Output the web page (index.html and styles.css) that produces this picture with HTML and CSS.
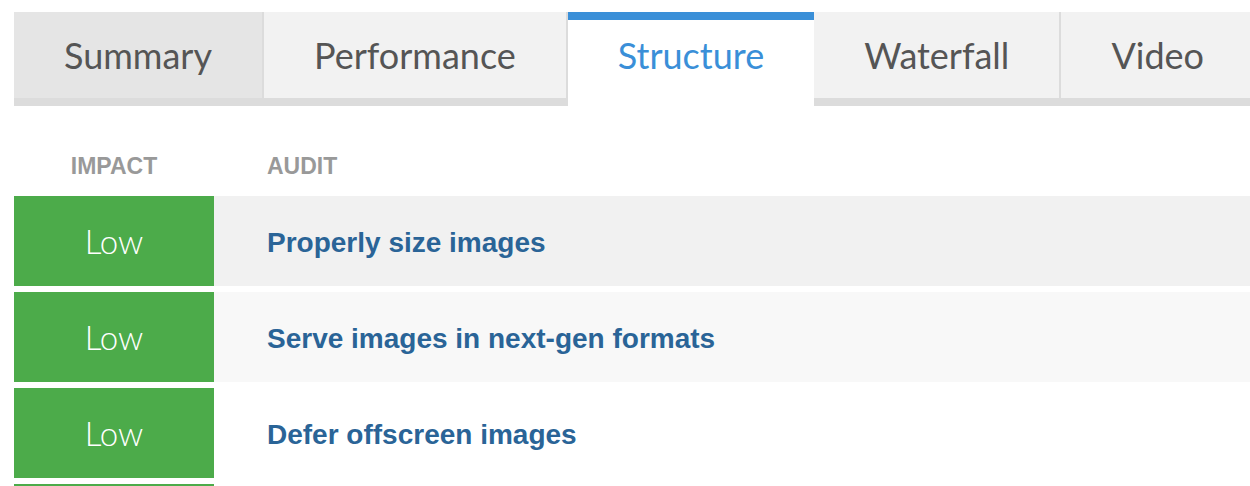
FILE: index.html
```html
<!DOCTYPE html>
<html lang="en">
<head>
<meta charset="utf-8">
<title>Structure</title>
<link rel="stylesheet" href="styles.css">
</head>
<body>
<div class="page">
  <nav class="tabs">
    <div class="tab tab-hover">Summary</div>
    <div class="tab">Performance</div>
    <div class="tab tab-active">Structure</div>
    <div class="tab">Waterfall</div>
    <div class="tab">Video</div>
  </nav>
  <div class="audits">
    <div class="audit-head">
      <div class="col-impact">IMPACT</div>
      <div class="col-audit">AUDIT</div>
    </div>
    <div class="audit-row row-1">
      <div class="impact">Low</div>
      <div class="audit-name">Properly size images</div>
    </div>
    <div class="audit-row row-2">
      <div class="impact">Low</div>
      <div class="audit-name">Serve images in next-gen formats</div>
    </div>
    <div class="audit-row row-3">
      <div class="impact">Low</div>
      <div class="audit-name">Defer offscreen images</div>
    </div>
    <div class="audit-row row-3">
      <div class="impact"></div>
      <div class="audit-name"></div>
    </div>
  </div>
</div>
</body>
</html>
```

FILE: styles.css
```css
html, body {
  margin: 0;
  padding: 0;
  background: #ffffff;
}

body {
  overflow: hidden;
}

.page {
  padding: 12px 0 0 14px;
}

.tabs {
  display: flex;
  font-family: Lato, "Open Sans", sans-serif;
  font-size: 36px;
  color: #555555;
}

.tab {
  height: 86px;
  line-height: 86px;
  padding: 0 50px;
  background: #f2f2f2;
  border-right: 2px solid #dcdcdc;
  border-bottom: 8px solid #dcdcdc;
  white-space: nowrap;
}

.tab-hover {
  background: #e5e5e5;
}

.tab-active {
  background: #ffffff;
  color: #3a8fd8;
  border-right: 0;
  border-bottom: 8px solid #ffffff;
  box-shadow: inset 0 8px 0 #3a8fd8;
}

.audits {
  font-family: "Liberation Sans", Arial, sans-serif;
}

.audit-head {
  display: flex;
  padding: 46px 0 16px;
  line-height: 28px;
  font-size: 23px;
  font-weight: bold;
  color: #999999;
}

.col-impact {
  width: 200px;
  text-align: center;
}

.col-audit {
  padding-left: 53px;
}

.audit-row {
  display: flex;
  height: 90px;
  margin-bottom: 6px;
}

.row-1 { background: #f1f1f1; }
.row-2 { background: #f8f8f8; }
.row-3 { background: #ffffff; }

.impact {
  width: 200px;
  flex: none;
  background: #4cab4a;
  color: #ffffff;
  font-family: Lato, "Open Sans", sans-serif;
  font-weight: 300;
  font-size: 33px;
  display: flex;
  align-items: center;
  justify-content: center;
}

.audit-name {
  display: flex;
  align-items: center;
  padding: 3px 0 0 53px;
  font-size: 28px;
  font-weight: bold;
  color: #2a6497;
}
```
